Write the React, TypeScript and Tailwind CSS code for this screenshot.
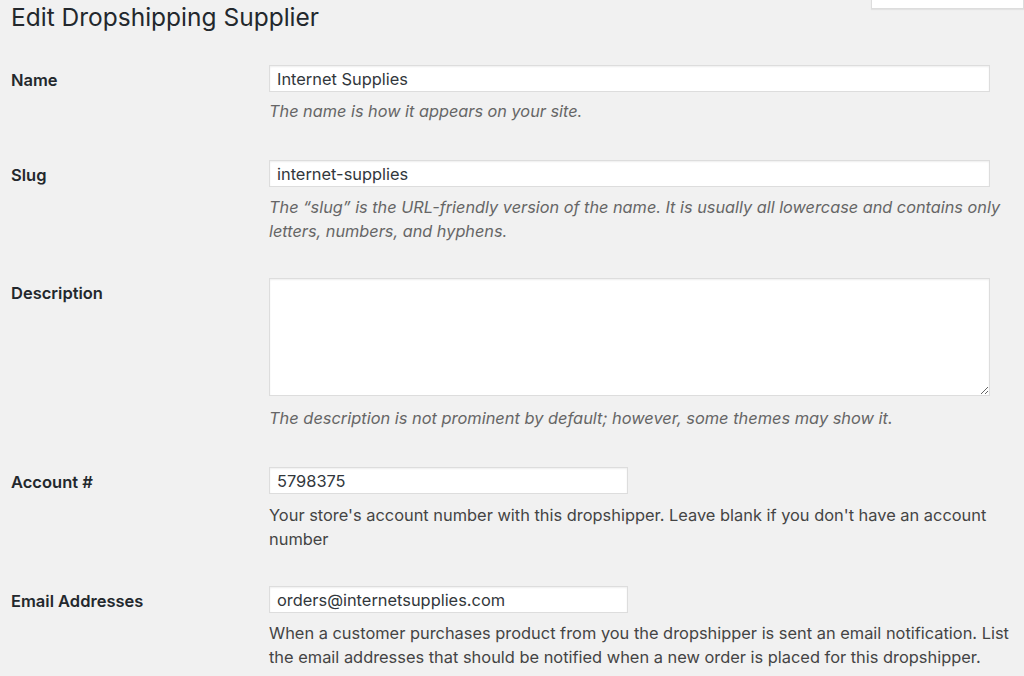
import React from "react";

const font = { fontFamily: 'Inter, "Liberation Sans", Arial, sans-serif' };

function Row({ label, className, children }: { label: string; className: string; children: React.ReactNode }) {
  return (
    <div className={`flex ${className}`}>
      <div className="w-[258px] shrink-0 pt-[3px] text-[16.5px] leading-[24px] font-semibold text-[#23282d]">{label}</div>
      <div className="w-[745px] shrink-0">{children}</div>
    </div>
  );
}

const inputCls =
  "h-[27px] bg-white border border-[#dddddd] shadow-[inset_0_1px_2px_rgba(0,0,0,0.07)] px-[7px] text-[16.4px] text-[#32373c] outline-none";

export default function App() {
  return (
    <div className="w-[1024px] h-[676px] overflow-hidden bg-[#f1f1f1] pl-[11px]" style={font}>
      <div className="flex justify-between items-start">
        <h1 className="text-[24.5px] leading-[34px] font-normal text-[#23282d]">Edit Dropshipping Supplier</h1>
        <div className="w-[153px] h-[10px] -mt-[1px] bg-white border border-[#dddddd] shadow-[0_1px_1px_rgba(0,0,0,0.06)]"></div>
      </div>
      <div className="flex flex-col">
        <Row label="Name" className="mt-[31px]">
          <input className={`${inputCls} w-[721px] block`} defaultValue="Internet Supplies" />
          <p className="mt-[7px] text-[16.3px] leading-[24px] italic text-[#666666]">The name is how it appears on your site.</p>
        </Row>
        <Row label="Slug" className="mt-[37px]">
          <input className={`${inputCls} w-[721px] block`} defaultValue="internet-supplies" />
          <p className="mt-[8px] text-[16.3px] leading-[24px] italic text-[#666666]">
            The “slug” is the URL-friendly version of the name. It is usually all lowercase and contains only letters, numbers, and hyphens.
          </p>
        </Row>
        <Row label="Description" className="mt-[35px]">
          <textarea className="block w-[721px] h-[118px] bg-white border border-[#dddddd] shadow-[inset_0_1px_2px_rgba(0,0,0,0.07)] outline-none"></textarea>
          <p className="mt-[10px] text-[16.4px] leading-[24px] italic text-[#666666]">
            The description is not prominent by default; however, some themes may show it.
          </p>
        </Row>
        <Row label="Account #" className="mt-[37px]">
          <input className={`${inputCls} w-[359px] block`} defaultValue="5798375" />
          <p className="mt-[9px] text-[16.4px] leading-[24px] text-[#444444]">
            Your store's account number with this dropshipper. Leave blank if you don't have an account number
          </p>
        </Row>
        <Row label="Email Addresses" className="mt-[35px]">
          <input className={`${inputCls} w-[359px] block`} defaultValue="orders@internetsupplies.com" />
          <p className="mt-[8px] text-[16.4px] leading-[24px] text-[#444444]">
            When a customer purchases product from you the dropshipper is sent an email notification. List the email addresses that should be notified when a new order is placed for this dropshipper.
          </p>
        </Row>
      </div>
    </div>
  );
}
